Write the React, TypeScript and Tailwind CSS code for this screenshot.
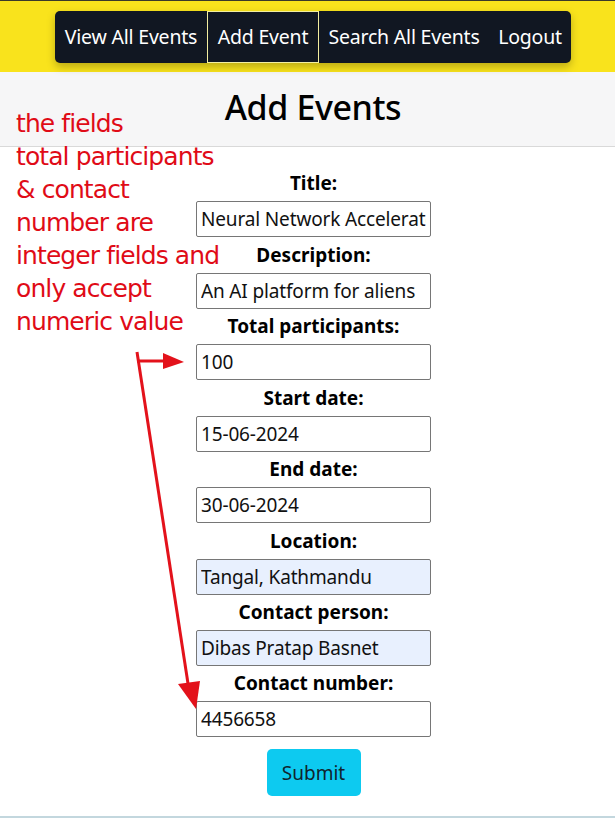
import React from "react";

const fields: { label: string; value: string; auto?: boolean }[] = [
  { label: "Title:", value: "Neural Network Accelerator" },
  { label: "Description:", value: "An AI platform for aliens" },
  { label: "Total participants:", value: "100" },
  { label: "Start date:", value: "15-06-2024" },
  { label: "End date:", value: "30-06-2024" },
  { label: "Location:", value: "Tangal, Kathmandu", auto: true },
  { label: "Contact person:", value: "Dibas Pratap Basnet", auto: true },
  { label: "Contact number:", value: "4456658" },
];

const font = { fontFamily: '"Noto Sans", "Open Sans", sans-serif' };

export default function App() {
  return (
    <div className="relative w-[615px] h-[818px] overflow-hidden bg-white" style={font}>
      <header className="h-[72px] bg-[#f9e31c] border-t border-[#3a3a2a] flex justify-center pt-[10px] pl-[11px]">
        <nav className="h-[52px] flex rounded-[5px] bg-[#111722] shadow-[0_4px_8px_rgba(0,0,0,0.25)] text-white text-[19.5px] tracking-[-0.2px]">
          <a className="w-[152px] flex items-center justify-center">View All Events</a>
          <a className="w-[112px] flex items-center justify-center border border-[#f3eea0]">Add Event</a>
          <a className="w-[170px] flex items-center justify-center">Search All Events</a>
          <a className="w-[82px] flex items-center justify-center">Logout</a>
        </nav>
      </header>
      <section className="h-[75px] bg-[#f6f6f7] border-b border-[#d9d9d9] flex items-center justify-center pl-[11px] pb-[4px]">
        <h1 className="text-[34px] font-medium text-black tracking-[-0.4px]">Add Events</h1>
      </section>
      <form className="flex flex-col items-center pt-[19px] pl-[12px]">
        {fields.map((f) => (
          <div key={f.label} className="flex flex-col items-center">
            <label className="h-[35.43px] flex items-center justify-center text-[19px] font-bold text-black">
              {f.label}
            </label>
            <input
              readOnly
              value={f.value}
              className={`w-[235px] h-[36px] border border-[#767676] rounded-[2px] px-[4px] text-[19px] tracking-[-0.15px] text-[#111] outline-none ${f.auto ? "bg-[#e8f0fe]" : "bg-white"}`}
              style={font}
            />
          </div>
        ))}
        <button
          type="button"
          className="mt-[12px] w-[94px] h-[47px] rounded-[5px] bg-[#0dcaf0] text-[19px] text-[#10242e]"
        >
          Submit
        </button>
      </form>
      <div className="absolute left-0 right-0 bottom-0 h-[2px] bg-[#c3d7de]" />
      <div
        className="absolute left-[16px] top-[107px] text-[25px] leading-[33px] text-[#e00b17] tracking-[-0.9px]"
        style={{ fontFamily: '"DejaVu Sans", sans-serif' }}
      >
        the fields
        <br />
        total participants
        <br />& contact
        <br />
        number are
        <br />
        integer fields and
        <br />
        only accept
        <br />
        numeric value
      </div>
      <svg className="absolute left-0 top-0 pointer-events-none" width="615" height="818">
        <line x1="137" y1="361" x2="166" y2="361" stroke="#e3121b" strokeWidth="3" />
        <polygon points="163,353 184,362 163,369" fill="#e3121b" />
        <line x1="137" y1="352" x2="189" y2="690" stroke="#e3121b" strokeWidth="3" />
        <polygon points="178,684 200,681 196,709" fill="#e3121b" />
      </svg>
    </div>
  );
}
